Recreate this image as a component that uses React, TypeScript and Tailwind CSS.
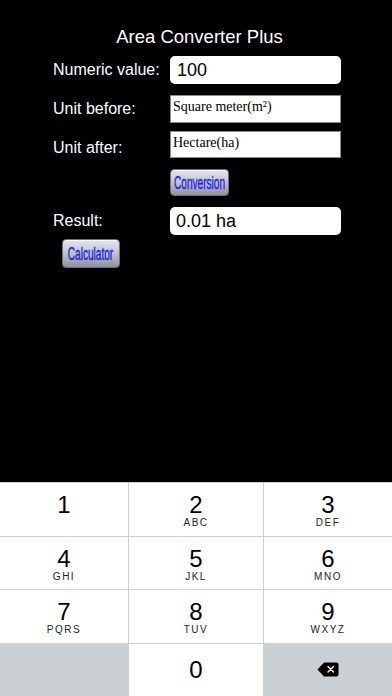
import React from "react";

const keys = [
  { d: "1", l: "" },
  { d: "2", l: "ABC" },
  { d: "3", l: "DEF" },
  { d: "4", l: "GHI" },
  { d: "5", l: "JKL" },
  { d: "6", l: "MNO" },
  { d: "7", l: "PQRS" },
  { d: "8", l: "TUV" },
  { d: "9", l: "WXYZ" },
];

function GlossButton({ label, className }: { label: string; className: string }) {
  return (
    <button
      className={
        "flex items-center justify-center overflow-visible rounded-[4px] border border-[#6d6f7a] bg-gradient-to-b from-[#e3e5f0] via-[#bfc2d2] to-[#8f919c] shadow-[inset_0_1px_0_rgba(255,255,255,0.7)] " +
        className
      }
    >
      <span className="inline-block scale-x-[0.56] whitespace-nowrap text-[18px] leading-none text-[#2222d8] [-webkit-text-stroke:0.4px_#2222d8]">
        {label}
      </span>
    </button>
  );
}

function Key({ d, l }: { d: string; l: string }) {
  return (
    <div className="flex flex-col items-center bg-white pt-[9px]">
      <span className="text-[24px] leading-[26px] text-black">{d}</span>
      <span className="-mt-px text-[10px] leading-[12px] tracking-[1.5px] text-[#222]">{l}</span>
    </div>
  );
}

export default function App() {
  return (
    <div className="flex h-[696px] w-[392px] flex-col bg-black" style={{ fontFamily: '"Liberation Sans", Arial, sans-serif' }}>
      <div className="h-[482px] shrink-0">
        <h1 className="pl-[7px] pt-[26px] text-center text-[18.5px] leading-[22px] text-white">Area Converter Plus</h1>

        <div className="mt-[8px] grid grid-cols-[117px_171px] pl-[53px]">
          <div className="flex h-[28px] items-center text-[16px] text-white">Numeric value:</div>
          <div className="flex h-[28px] items-center rounded-[5px] bg-white pl-[7px] text-[18px] text-black">100</div>

          <div className="mt-[11px] flex h-[28px] items-center text-[16px] text-white">Unit before:</div>
          <div
            className="mt-[11px] h-[28px] border border-[#8a8a8a] bg-white pl-[2px] pt-[3px] text-[14px] leading-[16px] text-black"
            style={{ fontFamily: '"Liberation Serif", "Times New Roman", serif' }}
          >
            Square meter(m²)
          </div>

          <div className="mt-[8px] flex h-[27px] items-center pt-[6px] text-[16px] text-white">Unit after:</div>
          <div
            className="mt-[8px] h-[27px] border border-[#8a8a8a] bg-white pl-[2px] pt-[3px] text-[14px] leading-[16px] text-black"
            style={{ fontFamily: '"Liberation Serif", "Times New Roman", serif' }}
          >
            Hectare(ha)
          </div>

          <div className="mt-[11px] h-[27px]" />
          <div className="mt-[11px] h-[27px]">
            <GlossButton label="Conversion" className="h-[27px] w-[59px]" />
          </div>

          <div className="mt-[11px] flex h-[28px] items-center text-[16px] text-white">Result:</div>
          <div className="mt-[11px] flex h-[28px] items-center rounded-[5px] bg-white pl-[6px] text-[18px] text-black">0.01 ha</div>
        </div>

        <div className="mt-[4px] pl-[62px]">
          <GlossButton label="Calculator" className="h-[29px] w-[58px]" />
        </div>
      </div>

      <div className="grid flex-1 grid-cols-[128px_134px_128px] grid-rows-4 gap-px bg-[#cdcfd2] pt-px">
        {keys.map((k) => (
          <Key key={k.d} d={k.d} l={k.l} />
        ))}
        <div className="bg-[#cbd0d4]" />
        <div className="flex items-center justify-center bg-white">
          <span className="text-[24px] leading-[26px] text-black">0</span>
        </div>
        <div className="flex items-center justify-center bg-[#cbd0d4]">
          <svg width="22" height="15" viewBox="0 0 22 15">
            <path d="M7 0.5 H19.5 A2 2 0 0 1 21.5 2.5 V12.5 A2 2 0 0 1 19.5 14.5 H7 L0.5 7.5 Z" fill="#000" />
            <path d="M11 4.5 L16.5 10 M16.5 4.5 L11 10" stroke="#fff" strokeWidth="1.3" strokeLinecap="round" />
          </svg>
        </div>
      </div>
    </div>
  );
}
